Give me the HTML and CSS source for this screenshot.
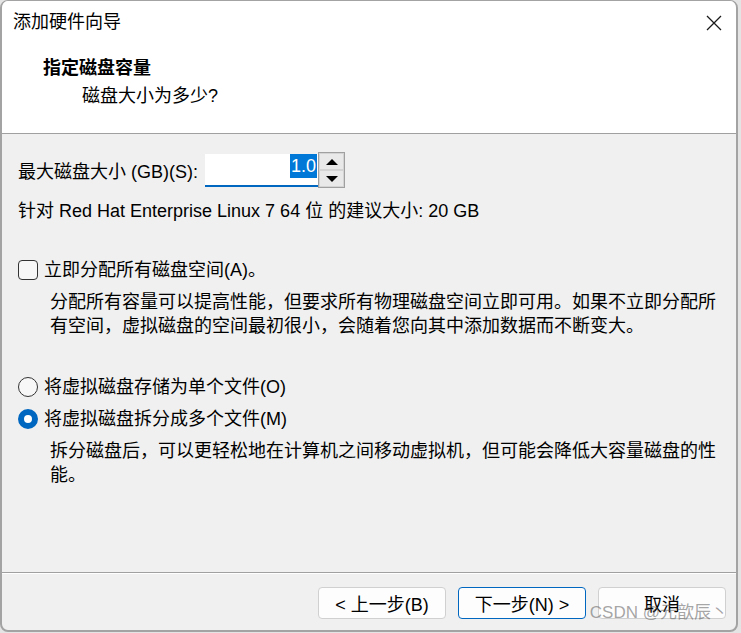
FILE: index.html
```html
<!DOCTYPE html>
<html lang="zh-CN">
<head>
  <meta charset="UTF-8">
  <title>添加硬件向导</title>
  <link rel="stylesheet" href="styles.css">
</head>
<body>
  <div class="window">
    <div class="titlebar">
      <span class="title">添加硬件向导</span>
      <svg class="close" width="16" height="16" viewBox="0 0 16 16">
        <path d="M1 1 L15 15 M15 1 L1 15" stroke="#1a1a1a" stroke-width="1.3" fill="none"/>
      </svg>
    </div>

    <div class="header">
      <h1>指定磁盘容量</h1>
      <p>磁盘大小为多少?</p>
    </div>

    <div class="content">
      <div class="size-row">
        <label>最大磁盘大小 (GB)(S):</label>
        <div class="input"><span class="selected">1.0</span></div>
        <div class="spinner">
          <div class="spin-btn"><span class="arrow up"></span></div>
          <div class="spin-btn"><span class="arrow down"></span></div>
        </div>
      </div>
      <p class="hint">针对 Red Hat Enterprise Linux 7 64 位 的建议大小: 20 GB</p>

      <div class="check-row">
        <span class="checkbox"></span>
        <span>立即分配所有磁盘空间(A)。</span>
      </div>
      <p class="desc">分配所有容量可以提高性能，但要求所有物理磁盘空间立即可用。如果不立即分配所有空间，虚拟磁盘的空间最初很小，会随着您向其中添加数据而不断变大。</p>

      <div class="radio-row first">
        <span class="radio"></span>
        <span>将虚拟磁盘存储为单个文件(O)</span>
      </div>
      <div class="radio-row">
        <span class="radio checked"></span>
        <span>将虚拟磁盘拆分成多个文件(M)</span>
      </div>
      <p class="desc">拆分磁盘后，可以更轻松地在计算机之间移动虚拟机，但可能会降低大容量磁盘的性能。</p>
    </div>

    <div class="footer">
      <button class="btn">&lt; 上一步(B)</button>
      <button class="btn primary">下一步(N) &gt;</button>
      <button class="btn">取消</button>
    </div>

    <div class="watermark">CSDN @元歆辰丶</div>
  </div>
</body>
</html>
```

FILE: styles.css
```css
* {
  margin: 0;
  padding: 0;
  box-sizing: border-box;
}
body {
  background: #e4e4e4;
  font-family: "Liberation Sans", "Noto Sans CJK SC", sans-serif;
  font-size: 18px;
  color: #000;
  width: 741px;
  height: 633px;
  overflow: hidden;
}
.window {
  position: relative;
  width: 738px;
  height: 632px;
  border: 2px solid #a3a3a3;
  border-top-width: 1px;
  border-radius: 8px;
  overflow: hidden;
  background: #f0f0f0;
  display: flex;
  flex-direction: column;
}
.titlebar {
  height: 43px;
  background: #fff;
  display: flex;
  align-items: center;
  justify-content: space-between;
  padding: 0 14px 0 11px;
}
.title {
  line-height: 43px;
}
.close {
  display: block;
}
.header {
  background: #fff;
  padding: 12px 0 25px 41px;
  border-bottom: 1px solid #a0a0a0;
}
.header h1 {
  font-size: 18px;
  font-weight: bold;
  line-height: 24px;
}
.header p {
  line-height: 24px;
  margin: 4px 0 0 39px;
}
.content {
  flex: 1;
  padding: 18px 16px 0 16px;
}
.size-row {
  display: flex;
  align-items: center;
  height: 36px;
}
.size-row label {
  margin-right: 7px;
}
.input {
  width: 113px;
  height: 33px;
  background: #fff;
  border-bottom: 2px solid #0067c0;
  display: flex;
  justify-content: flex-end;
  align-items: flex-start;
  padding-right: 1px;
}
.selected {
  background: #0078d7;
  color: #fff;
  line-height: 24px;
  padding: 0 1px;
}
.spinner {
  width: 27px;
  height: 36px;
  border: 1px solid #a0a0a0;
  display: flex;
  flex-direction: column;
}
.spin-btn {
  flex: 1;
  background: #e9e9e9;
  border: 1px solid #d4d4d4;
  display: flex;
  align-items: center;
  justify-content: center;
}
.arrow {
  width: 0;
  height: 0;
  border-left: 6px solid transparent;
  border-right: 6px solid transparent;
}
.arrow.up {
  border-bottom: 6px solid #000;
}
.arrow.down {
  border-top: 6px solid #000;
}
.hint {
  line-height: 24px;
  margin-top: 11px;
}
.check-row,
.radio-row {
  display: flex;
  align-items: center;
  gap: 6px;
  line-height: 24px;
}
.check-row {
  margin-top: 35px;
}
.checkbox {
  width: 20px;
  height: 20px;
  border: 1px solid #333;
  border-radius: 4px;
  background: #f7f7f7;
}
.desc {
  line-height: 24px;
  margin: 8px 0 0 32px;
  width: 672px;
}
.radio-row {
  margin-top: 8px;
}
.radio-row.first {
  margin-top: 37px;
}
.radio {
  width: 20px;
  height: 20px;
  border: 1px solid #333;
  border-radius: 50%;
  background: #f7f7f7;
}
.radio.checked {
  border: 6px solid #0067c0;
  background: #fff;
}
.footer {
  height: 58px;
  border-top: 1px solid #a0a0a0;
  box-shadow: inset 0 1px #fff;
  display: flex;
  justify-content: flex-end;
  gap: 12px;
  padding: 14px 10px 0 0;
}
.btn {
  width: 128px;
  height: 32px;
  font-family: inherit;
  font-size: 18px;
  color: #000;
  background: #fdfdfd;
  border: 1px solid #d0d0d0;
  border-radius: 4px;
}
.btn.primary {
  border-color: #0067c0;
}
.watermark {
  position: absolute;
  right: 8px;
  bottom: 7px;
  font-size: 17px;
  color: rgba(90, 90, 90, 0.55);
}
```
